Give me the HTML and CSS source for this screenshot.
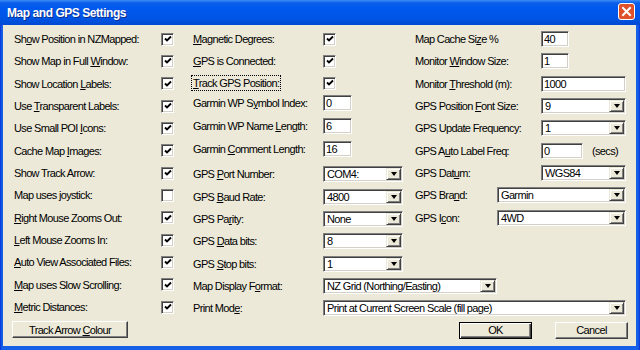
FILE: index.html
```html
<!DOCTYPE html>
<html lang="en">
<head>
    <meta charset="UTF-8">
    <title>Map and GPS Settings</title>
    <link rel="stylesheet" href="styles.css">
</head>
<body>
    <div class="window">
        <div class="titlebar">
            <span class="title">Map and GPS Settings</span>
            <span class="close">
                <svg width="17" height="17" viewBox="0 0 17 17">
                    <rect x="0.5" y="0.5" width="16" height="16" rx="2.5" fill="#e0502a" stroke="#fff"/>
                    <path d="M5 5 L12 12 M12 5 L5 12" stroke="#fff" stroke-width="2" stroke-linecap="square"/>
                </svg>
            </span>
        </div>

        <div class="dialog-body">
            <!-- left column: display options -->
            <div class="col-left">
                <div class="row"><span class="label">Sh<u>o</u>w Position in NZMapped:</span><span class="check on"><svg viewBox="0 0 8 8"><path d="M1 3.5 L3 5.5 L7 1.5"/></svg></span></div>
                <div class="row"><span class="label">Show Map in Full <u>W</u>indow:</span><span class="check on"><svg viewBox="0 0 8 8"><path d="M1 3.5 L3 5.5 L7 1.5"/></svg></span></div>
                <div class="row"><span class="label">Show Location <u>L</u>abels:</span><span class="check on"><svg viewBox="0 0 8 8"><path d="M1 3.5 L3 5.5 L7 1.5"/></svg></span></div>
                <div class="row"><span class="label">Use <u>T</u>ransparent Labels:</span><span class="check on"><svg viewBox="0 0 8 8"><path d="M1 3.5 L3 5.5 L7 1.5"/></svg></span></div>
                <div class="row"><span class="label">Use Small POI <u>I</u>cons:</span><span class="check on"><svg viewBox="0 0 8 8"><path d="M1 3.5 L3 5.5 L7 1.5"/></svg></span></div>
                <div class="row"><span class="label">Cache Map <u>I</u>mages:</span><span class="check on"><svg viewBox="0 0 8 8"><path d="M1 3.5 L3 5.5 L7 1.5"/></svg></span></div>
                <div class="row"><span class="label">Show Track Arrow:</span><span class="check on"><svg viewBox="0 0 8 8"><path d="M1 3.5 L3 5.5 L7 1.5"/></svg></span></div>
                <div class="row"><span class="label">Map uses joystick:</span><span class="check"></span></div>
                <div class="row"><span class="label"><u>R</u>ight Mouse Zooms Out:</span><span class="check on"><svg viewBox="0 0 8 8"><path d="M1 3.5 L3 5.5 L7 1.5"/></svg></span></div>
                <div class="row"><span class="label"><u>L</u>eft Mouse Zooms In:</span><span class="check on"><svg viewBox="0 0 8 8"><path d="M1 3.5 L3 5.5 L7 1.5"/></svg></span></div>
                <div class="row"><span class="label"><u>A</u>uto View Associated Files:</span><span class="check on"><svg viewBox="0 0 8 8"><path d="M1 3.5 L3 5.5 L7 1.5"/></svg></span></div>
                <div class="row"><span class="label"><u>M</u>ap uses Slow Scrolling:</span><span class="check on"><svg viewBox="0 0 8 8"><path d="M1 3.5 L3 5.5 L7 1.5"/></svg></span></div>
                <div class="row"><span class="label"><u>M</u>etric Distances:</span><span class="check on"><svg viewBox="0 0 8 8"><path d="M1 3.5 L3 5.5 L7 1.5"/></svg></span></div>
                <button class="btn btn-track">Track Arrow <u>C</u>olour</button>
            </div>

            <div class="main">
                <div class="main-top">
                    <!-- middle column: GPS connection -->
                    <div class="col-mid">
                        <div class="group">
                            <div class="row row-22"><span class="label"><u>M</u>agnetic Degrees:</span><span class="check on"><svg viewBox="0 0 8 8"><path d="M1 3.5 L3 5.5 L7 1.5"/></svg></span></div>
                            <div class="row row-22"><span class="label"><u>G</u>PS is Connected:</span><span class="check on"><svg viewBox="0 0 8 8"><path d="M1 3.5 L3 5.5 L7 1.5"/></svg></span></div>
                            <div class="row row-22"><span class="label"><span class="focus"><u>T</u>rack GPS Position:</span></span><span class="check on"><svg viewBox="0 0 8 8"><path d="M1 3.5 L3 5.5 L7 1.5"/></svg></span></div>
                        </div>
                        <div class="group group-garmin">
                            <div class="row"><span class="label">Garmin WP S<u>y</u>mbol Index:</span><input class="field w-29" value="0"></div>
                            <div class="row"><span class="label">Garmin WP Name <u>L</u>ength:</span><input class="field w-29" value="6"></div>
                            <div class="row"><span class="label">Garmin <u>C</u>omment Length:</span><input class="field w-29" value="16"></div>
                        </div>
                        <div class="group group-port">
                            <div class="row"><span class="label">GPS <u>P</u>ort Number:</span><div class="combo w-80"><span class="combo-value">COM4:</span><span class="combo-btn"></span></div></div>
                            <div class="row"><span class="label">GPS <u>B</u>aud Rate:</span><div class="combo w-80"><span class="combo-value">4800</span><span class="combo-btn"></span></div></div>
                            <div class="row"><span class="label">GPS Pa<u>r</u>ity:</span><div class="combo w-80"><span class="combo-value">None</span><span class="combo-btn"></span></div></div>
                            <div class="row"><span class="label">GPS <u>D</u>ata bits:</span><div class="combo w-80"><span class="combo-value">8</span><span class="combo-btn"></span></div></div>
                            <div class="row"><span class="label">GPS <u>S</u>top bits:</span><div class="combo w-80"><span class="combo-value">1</span><span class="combo-btn"></span></div></div>
                        </div>
                    </div>

                    <!-- right column: monitor and GPS display -->
                    <div class="col-right">
                        <div class="row"><span class="label">Map Cache Si<u>z</u>e %</span><input class="field w-28" value="40"></div>
                        <div class="row"><span class="label">Monitor <u>W</u>indow Size:</span><input class="field w-28" value="1"></div>
                        <div class="row"><span class="label">Monitor <u>T</u>hreshold (m):</span><input class="field grow" value="1000"></div>
                        <div class="row"><span class="label">GPS Position <u>F</u>ont Size:</span><div class="combo grow"><span class="combo-value">9</span><span class="combo-btn"></span></div></div>
                        <div class="row"><span class="label">GPS Update Frequency:</span><div class="combo grow"><span class="combo-value">1</span><span class="combo-btn"></span></div></div>
                        <div class="row"><span class="label">GPS A<u>u</u>to Label Freq:</span><input class="field w-42" value="0"><span class="unit">(secs)</span></div>
                        <div class="row"><span class="label">GPS Dat<u>u</u>m:</span><div class="combo grow"><span class="combo-value">WGS84</span><span class="combo-btn"></span></div></div>
                        <div class="row"><span class="label label-short">GPS Bra<u>n</u>d:</span><div class="combo grow"><span class="combo-value">Garmin</span><span class="combo-btn"></span></div></div>
                        <div class="row"><span class="label label-short">GPS I<u>c</u>on:</span><div class="combo grow"><span class="combo-value">4WD</span><span class="combo-btn"></span></div></div>
                    </div>
                </div>

                <div class="wide-rows">
                    <div class="row"><span class="label">Map Display F<u>o</u>rmat:</span><div class="combo w-174"><span class="combo-value">NZ Grid (Northing/Easting)</span><span class="combo-btn"></span></div></div>
                    <div class="row"><span class="label">Print Mod<u>e</u>:</span><div class="combo grow"><span class="combo-value">Print at Current Screen Scale (fill page)</span><span class="combo-btn"></span></div></div>
                </div>

                <div class="actions">
                    <button class="btn btn-default">OK</button>
                    <button class="btn">Cancel</button>
                </div>
            </div>
        </div>
    </div>
</body>
</html>
```

FILE: styles.css
```css
body {
    margin: 0;
    background: #fff;
    font-family: "Liberation Sans", Arial, sans-serif;
    font-size: 11px;
    letter-spacing: -0.65px;
    color: #000;
}
u {
    text-decoration: underline;
    text-underline-offset: 1px;
}
.window {
    width: 640px;
    height: 350px;
    display: flex;
    flex-direction: column;
    background: linear-gradient(90deg, #0831d9 0, #1660e8 2px, #1660e8 calc(100% - 2px), #0831d9 100%);
}
.titlebar {
    height: 25px;
    flex: none;
    display: flex;
    align-items: center;
    justify-content: space-between;
    padding: 0 5px 0 7px;
    background: linear-gradient(#3d8cf6 0, #0a5ee8 3px, #0058ee 8px, #0055e6 18px, #0048d0 25px);
}
.title {
    color: #fff;
    font-weight: bold;
    font-size: 12px;
    letter-spacing: -0.45px;
    text-shadow: 1px 1px #0a2e8c;
}
.close {
    display: flex;
    margin-top: -3px;
}
.dialog-body {
    flex: 1;
    min-height: 0;
    display: flex;
    margin: 0 4px 4px 3px;
    background: #ece9d8;
}

/* rows */
.row {
    display: flex;
    align-items: center;
    height: 22.33px;
    white-space: nowrap;
}
.row-22 {
    height: 22px;
}
.label {
    flex: none;
}
.col-left {
    width: 178px;
    flex: none;
    padding: 3px 0 0 11px;
}
.col-left .label {
    width: 147px;
}
.main {
    flex: 1;
    min-width: 0;
    padding: 3px 10px 0 0;
}
.main-top {
    display: flex;
}
.col-mid {
    width: 221px;
    flex: none;
    padding-left: 1px;
}
.col-mid .label,
.wide-rows .label {
    width: 130px;
}
.wide-rows {
    padding-left: 1px;
}
.group-garmin {
    margin-top: -2px;
}
.group-garmin .row {
    height: 22.75px;
}
.group-port {
    margin-top: 3px;
}
.col-right {
    flex: 1;
    min-width: 0;
    padding-left: 1px;
}
.col-right .label {
    width: 126px;
}
.col-right .label-short {
    width: 82px;
}
.unit {
    margin-left: 9px;
}
.focus {
    outline: 1px dotted #000;
    outline-offset: 1px;
}

/* controls */
.check {
    width: 13px;
    height: 13px;
    box-sizing: border-box;
    background: #fff;
    border: 1px solid;
    border-color: #808080 #fff #fff #808080;
    box-shadow: inset 1px 1px #404040, inset -1px -1px #d4d0c8;
    display: flex;
    align-items: center;
    justify-content: center;
}
.check svg {
    width: 8px;
    height: 8px;
    fill: none;
    stroke: #000;
    stroke-width: 1.9;
}
.field,
.combo {
    height: 16px;
    box-sizing: border-box;
    background: #fff;
    border: 1px solid;
    border-color: #808080 #fff #fff #808080;
    box-shadow: inset 1px 1px #404040, inset -1px -1px #d4d0c8;
}
.field {
    margin: 0;
    padding: 0 2px;
    font: inherit;
    letter-spacing: inherit;
    color: #000;
    outline: none;
}
.combo {
    display: flex;
    padding: 1px;
}
.combo-value {
    flex: 1;
    padding-left: 2px;
    line-height: 12px;
    overflow: hidden;
}
.combo-btn {
    width: 15px;
    flex: none;
    box-sizing: border-box;
    background: #ece9d8;
    border: 1px solid;
    border-color: #ece9d8 #404040 #404040 #ece9d8;
    box-shadow: inset 1px 1px #fff, inset -1px -1px #808080;
    display: flex;
    align-items: center;
    justify-content: center;
}
.combo-btn::after {
    content: "";
    border-left: 3.5px solid transparent;
    border-right: 3.5px solid transparent;
    border-top: 4px solid #000;
}
.w-28 { width: 28px; }
.w-29 { width: 29px; }
.w-42 { width: 42px; }
.w-80 { width: 80px; }
.w-174 { width: 174px; }
.grow {
    flex: 1 1 0;
    width: 0;
    min-width: 0;
}

/* buttons */
.btn {
    height: 17px;
    padding: 0;
    font: inherit;
    letter-spacing: inherit;
    color: #000;
    background: #ece9d8;
    border: 1px solid;
    border-color: #fff #404040 #404040 #fff;
    box-shadow: inset -1px -1px #808080;
}
.btn-track {
    display: block;
    width: 116px;
    margin: 3px 0 0 -2px;
}
.actions {
    display: flex;
    justify-content: flex-end;
    gap: 23px;
    margin: 2px -2px 0 0;
}
.actions .btn {
    width: 73px;
}
.btn-default {
    border: 1px solid #000;
    box-shadow: inset 1px 1px #fff, inset -1px -1px #404040, inset -2px -2px #808080;
}
```
